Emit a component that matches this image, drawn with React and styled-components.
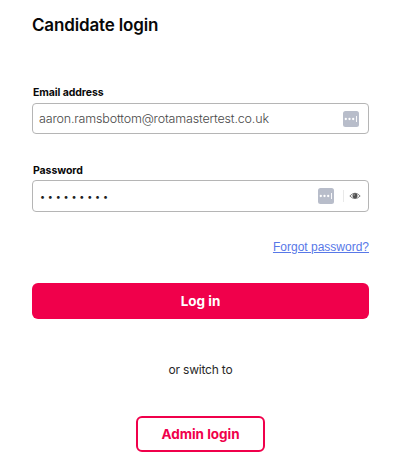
import React from 'react';
import { useState } from 'react';
import styled, { createGlobalStyle } from 'styled-components';

const GlobalStyle = createGlobalStyle`
  * {
    box-sizing: border-box;
  }
  body {
    margin: 0;
    background: #fff;
    color: #080808;
    font-family: Inter, 'Liberation Sans', sans-serif;
  }
`;

const StyledPage = styled.main`
  width: 400px;
  height: 469px;
  padding: 13px 31px 0 32px;
  overflow: hidden;
`;

const StyledForm = styled.form`
  display: flex;
  flex-direction: column;
`;

const Title = styled.h1`
  margin: 0 0 49px;
  font-size: 17px;
  line-height: 24px;
  font-weight: 600;
  letter-spacing: -0.16px;
  white-space: nowrap;
`;

const Field = styled.div`
  display: flex;
  flex-direction: column;
  margin-bottom: ${({ $gap }) => $gap}px;
`;

const Label = styled.label`
  margin-bottom: ${({ $space }) => $space}px;
  padding-left: 1px;
  font-size: 10.5px;
  line-height: 14px;
  font-weight: 700;
  letter-spacing: -0.08px;
`;

const InputBox = styled.div`
  display: flex;
  align-items: center;
  height: ${({ $height }) => $height}px;
  padding: 0 ${({ $end }) => $end}px 0 6px;
  border: 1px solid #b5b5b5;
  border-radius: 4px;
`;

const Input = styled.input`
  flex: 1;
  min-width: 0;
  padding: 0;
  border: 0;
  outline: 0;
  background: none;
  color: #484848;
  font-family: inherit;
  font-size: 12.5px;
  font-weight: 300;
  letter-spacing: -0.17px;

  &[type='password'] {
    padding-left: 1px;
    color: #202020;
    font-size: 9px;
    font-weight: 400;
    letter-spacing: 2.8px;
  }
`;

const Divider = styled.span`
  width: 1px;
  height: 12px;
  margin: 0 5px 0 9px;
  background: #e9e9e9;
`;

const EyeButton = styled.button`
  display: flex;
  padding: 0;
  border: 0;
  background: none;
`;

const ForgotLink = styled.a`
  align-self: flex-end;
  margin-bottom: 28px;
  color: #5878e8;
  font-family: 'Liberation Sans', Arial, sans-serif;
  font-size: 12px;
  line-height: 16px;
`;

const Button = styled.button`
  align-self: ${({ $outlined }) => ($outlined ? 'center' : 'stretch')};
  width: ${({ $outlined }) => ($outlined ? '129px' : 'auto')};
  height: 36px;
  padding: 0;
  border: ${({ $outlined }) => ($outlined ? '2px solid #f0004b' : '0')};
  border-radius: 6px;
  background: ${({ $outlined }) => ($outlined ? '#fff' : '#f0004b')};
  color: ${({ $outlined }) => ($outlined ? '#f0004b' : '#fff')};
  font-family: inherit;
  font-size: 13.5px;
  font-weight: 700;
  letter-spacing: -0.03px;
`;

const SwitchText = styled.p`
  margin: 43px 0 38px;
  color: #282828;
  font-size: 12px;
  line-height: 16px;
  letter-spacing: -0.2px;
  text-align: center;
`;

const KeyIcon = () => (
  <svg width="16" height="16" viewBox="0 0 16 16">
    <rect width="16" height="16" rx="2.5" fill="#b8bdca" />
    <circle cx="2.8" cy="8" r="1.15" fill="#fff" />
    <circle cx="6.5" cy="8" r="1.15" fill="#fff" />
    <circle cx="10.2" cy="8" r="1.15" fill="#fff" />
    <path d="M13.5 5v6" stroke="#fff" strokeWidth="0.9" />
  </svg>
);

const EyeIcon = () => (
  <svg width="12" height="10" viewBox="0 0 12 10">
    <path
      d="M.8 5Q6-.6 11.2 5Q6 10.2 .8 5Z"
      fill="#fff"
      stroke="#808080"
      strokeWidth="1"
    />
    <circle cx="6" cy="4.8" r="2.5" fill="#505050" />
    <circle cx="5.1" cy="3.9" r="0.7" fill="#bbb" />
  </svg>
);

const App = () => {
  const [email, setEmail] = useState('aaron.ramsbottom@rotamastertest.co.uk');
  const [password, setPassword] = useState('candidate');
  const [showPassword, setShowPassword] = useState(false);

  return (
    <StyledPage>
      <GlobalStyle />
      <StyledForm onSubmit={(event) => event.preventDefault()}>
        <Title>Candidate login</Title>
        <Field $gap={30}>
          <Label htmlFor="email" $space={3}>
            Email address
          </Label>
          <InputBox $end={9} $height={31}>
            <Input
              id="email"
              type="text"
              value={email}
              onChange={(event) => setEmail(event.target.value)}
            />
            <KeyIcon />
          </InputBox>
        </Field>
        <Field $gap={27}>
          <Label htmlFor="password" $space={2}>
            Password
          </Label>
          <InputBox $end={7} $height={32}>
            <Input
              id="password"
              type={showPassword ? 'text' : 'password'}
              value={password}
              onChange={(event) => setPassword(event.target.value)}
            />
            <KeyIcon />
            <Divider />
            <EyeButton
              type="button"
              onClick={() => setShowPassword(!showPassword)}
            >
              <EyeIcon />
            </EyeButton>
          </InputBox>
        </Field>
        <ForgotLink href="#">Forgot password?</ForgotLink>
        <Button type="submit">Log in</Button>
        <SwitchText>or switch to</SwitchText>
        <Button type="button" $outlined>
          Admin login
        </Button>
      </StyledForm>
    </StyledPage>
  );
};

export default App;
